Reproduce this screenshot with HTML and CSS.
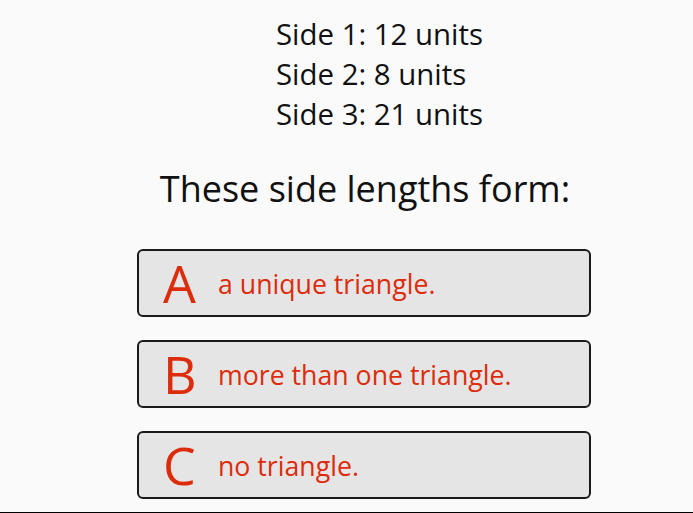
FILE: index.html
```html
<!DOCTYPE html>
<html>
<head>
<meta charset="utf-8">
<link rel="stylesheet" href="styles.css">
</head>
<body>
<div class="page">
  <div class="content">
    <div class="sides">
      <div class="side">Side 1: 12 units</div>
      <div class="side">Side 2: 8 units</div>
      <div class="side">Side 3: 21 units</div>
    </div>
    <div class="question">These side lengths form:</div>
    <div class="options">
      <div class="option"><span class="letter">A</span><span class="answer">a unique triangle.</span></div>
      <div class="option"><span class="letter">B</span><span class="answer">more than one triangle.</span></div>
      <div class="option"><span class="letter">C</span><span class="answer">no triangle.</span></div>
    </div>
  </div>
  <div class="bottom-line"></div>
</div>
</body>
</html>
```
FILE: styles.css
```css
html, body {
  margin: 0;
  padding: 0;
}
body {
  background: #fafafa;
  font-family: "Open Sans", "Liberation Sans", sans-serif;
  color: #111;
}
.page {
  width: 693px;
  height: 513px;
  display: flex;
  flex-direction: column;
  overflow: hidden;
}
.content {
  flex: 1;
  padding-left: 137px;
  width: 454px;
  display: flex;
  flex-direction: column;
}
.sides {
  padding-top: 14px;
  padding-left: 139px;
}
.side {
  font-size: 29.4px;
  line-height: 40px;
}
.question {
  margin-top: 30px;
  text-align: center;
  font-size: 36px;
  line-height: 50px;
  padding-left: 2px;
}
.options {
  margin-top: 35px;
  display: flex;
  flex-direction: column;
  gap: 23px;
}
.option {
  height: 64px;
  border: 2px solid #1a1a1a;
  border-radius: 6px;
  background: #e5e5e5;
  display: flex;
  align-items: center;
  color: #dd2c0c;
}
.letter {
  width: 79px;
  padding-left: 24px;
  box-sizing: border-box;
  font-size: 52px;
  line-height: 64px;
}
.answer {
  font-size: 26.7px;
}
.bottom-line {
  height: 1px;
  background: #000;
}
```
